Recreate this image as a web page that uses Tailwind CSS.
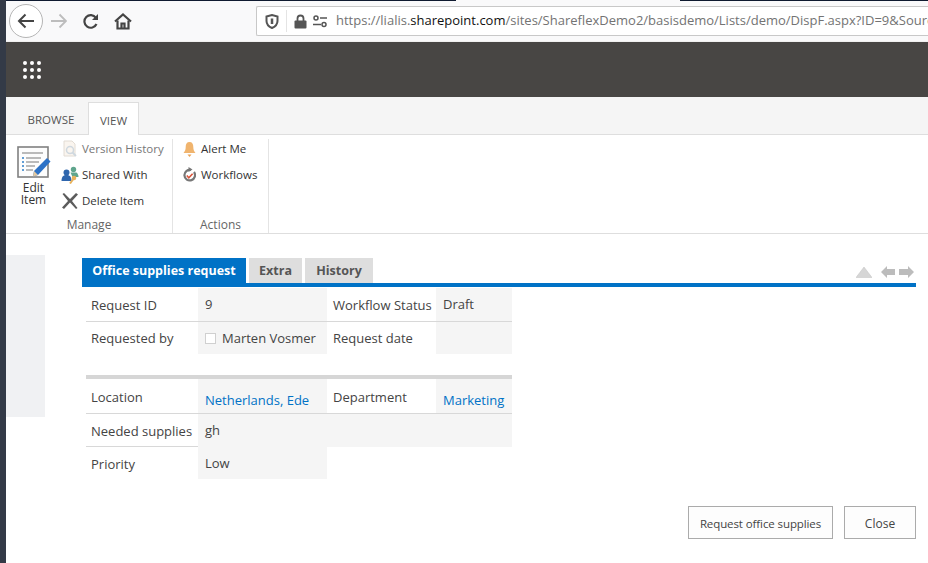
<!DOCTYPE html>
<html lang="en">
<head>
  <meta charset="UTF-8">
  <title>Office supplies request</title>
  <script src="https://cdn.jsdelivr.net/npm/@tailwindcss/browser@4"></script>
</head>
<body class="h-[563px] w-[928px] overflow-hidden bg-white flex font-['Open_Sans',sans-serif] text-[13px] text-[#444]">

  <!-- desktop edge -->
  <div class="w-[6px] bg-[#333a47]"></div>

  <div class="w-[922px] flex flex-col">
    <!-- browser toolbar -->
    <div class="h-[1px] flex bg-[#f9f9fa]">
      <div class="w-[450px] bg-[#0f1a30]"></div>
      <div class="w-[224px]"></div>
      <div class="w-[248px] bg-[#0f1a30]"></div>
    </div>
    <div class="h-[41px] bg-[#f9f9fa] flex items-center border-b border-[#f0f0f0]">
      <div class="w-[34px] h-[34px] rounded-full border border-[#b5b5b5] bg-white flex items-center justify-center ml-[3px] shrink-0">
        <svg width="18" height="16" viewBox="0 0 18 16" fill="none" stroke="#444" stroke-width="2"><path d="M17 8H2M8.500 1.500 2 8l6.500 6.500"/></svg>
      </div>
      <svg class="ml-[7px] shrink-0" width="17" height="16" viewBox="0 0 17 16" fill="none" stroke="#bdbdbd" stroke-width="1.800"><path d="M1 8h15M9.500 1.500 16 8l-6.500 6.500"/></svg>
      <svg class="ml-[16px] shrink-0" width="16" height="16" viewBox="0 0 16 16" fill="none" stroke="#444" stroke-width="2.200"><path d="M13.500 11a6.300 6.300 0 1 1-.6-6.200"/><path d="M15 1v6H9z" fill="#444" stroke="none"/></svg>
      <svg class="ml-[15px] shrink-0" width="18" height="17" viewBox="0 0 18 17" fill="none" stroke="#444" stroke-width="2.200"><path d="M1 8.500 9 1.500l8 7"/><path d="M3.500 7.500V15.500H14.500V7.500"/><path d="M7.500 15.500V10.500H10.500V15.500"/></svg>
      <!-- url box -->
      <div class="ml-[124px] flex-1 h-[30px] bg-white border border-r-0 border-[#c8c8c8] rounded-l-[2px] flex items-center overflow-hidden whitespace-nowrap">
        <svg class="ml-[8px] shrink-0" width="14" height="15" viewBox="0 0 14 15" fill="none" stroke="#555" stroke-width="2"><path d="M1.500 2.500 7 1l5.500 1.500V7c0 3.500-2.500 5.700-5.500 7C4 12.700 1.500 10.500 1.500 7z"/><path d="M7 4.500V10" stroke-width="2.500"/></svg>
        <div class="w-px h-[22px] bg-[#e4e4e4] ml-[7px] shrink-0"></div>
        <svg class="ml-[7px] shrink-0" width="13" height="15" viewBox="0 0 13 15"><path d="M3.500 7V4.500a3 3 0 0 1 6 0V7" fill="none" stroke="#555" stroke-width="1.800"/><rect x="0.500" y="6.500" width="12" height="8" rx="1" fill="#555"/></svg>
        <svg class="ml-[5px] shrink-0" width="16" height="13" viewBox="0 0 16 13" fill="none" stroke="#555" stroke-width="1.500"><circle cx="4" cy="3" r="2"/><path d="M8 3h7M1 9.500h8"/><circle cx="12" cy="9.500" r="2"/></svg>
        <div class="ml-[8px] text-[13px] text-[#737373]">https://lialis.<span class="text-[#111]">sharepoint.com</span>/sites/ShareflexDemo2/basisdemo/Lists/demo/DispF.aspx?ID=9&amp;Source=</div>
      </div>
    </div>

    <!-- suite bar -->
    <div class="h-[55px] bg-[#484644] flex items-center pl-[17px] shrink-0">
      <div class="grid grid-cols-3 gap-x-[3px] gap-y-[3px]">
        <i class="block w-[4px] h-[4px] rounded-full bg-white"></i><i class="block w-[4px] h-[4px] rounded-full bg-white"></i><i class="block w-[4px] h-[4px] rounded-full bg-white"></i>
        <i class="block w-[4px] h-[4px] rounded-full bg-white"></i><i class="block w-[4px] h-[4px] rounded-full bg-white"></i><i class="block w-[4px] h-[4px] rounded-full bg-white"></i>
        <i class="block w-[4px] h-[4px] rounded-full bg-white"></i><i class="block w-[4px] h-[4px] rounded-full bg-white"></i><i class="block w-[4px] h-[4px] rounded-full bg-white"></i>
      </div>
    </div>

    <!-- ribbon tabs -->
    <div class="h-[38px] bg-[#f5f5f5] border-b border-[#dedede] flex items-end pl-[8px] shrink-0">
      <div class="h-[32px] w-[74px] pt-[4px] flex items-center justify-center text-[11.5px] text-[#555]">BROWSE</div>
      <div class="h-[33px] w-[51px] pt-[3px] -mb-px bg-white border border-b-0 border-[#dedede] flex items-center justify-center text-[11.5px] text-[#555]">VIEW</div>
    </div>

    <!-- ribbon -->
    <div class="h-[99px] border-b border-[#dedede] flex pt-[4px] shrink-0 text-[11.500px] text-[#333]">
      <div class="w-[167px] border-r border-[#e4e4e4] h-[94px] flex flex-col">
        <div class="flex flex-1">
          <div class="w-[55px] flex flex-col items-center pt-[7px] text-[12px]">
            <svg width="34" height="32" viewBox="0 0 34 32">
              <rect x="1" y="1" width="30" height="30" fill="#fdfdfd" stroke="#808080" stroke-width="1.600"/>
              <path d="M5 7h21M9 12h15M9 16h13M9 20h9M9 24h7" stroke="#a5a5a5" stroke-width="1.500"/>
              <path d="M5 12h2M5 16h2M5 20h2M5 24h2" stroke="#2f7fc8" stroke-width="1.500"/>
              <path d="M30 12 33.500 15.500 21 29l-5 1.500L17 25z" fill="#2c72c7"/>
              <path d="M17 25l4 4-5 1.500z" fill="#e3c8a0"/>
            </svg>
            <span class="mt-[4px] text-center leading-[12px] text-[#333]">Edit<br>Item</span>
          </div>
          <div class="flex flex-col gap-[8px] pt-[1px]">
            <div class="h-[18px] flex items-center gap-[3px] text-[#777]">
              <svg class="shrink-0" width="18" height="18" viewBox="0 0 18 18"><path d="M3 1h8l3 3v12H3z" fill="#faf5ef" stroke="#e2dcd4"/><circle cx="9" cy="10" r="3.500" fill="none" stroke="#cfd8df" stroke-width="1.500"/><path d="M11.500 12.500 15 16" stroke="#cfd8df" stroke-width="1.800"/></svg>
              <span>Version History</span>
            </div>
            <div class="h-[18px] flex items-center gap-[3px]">
              <svg class="shrink-0" width="18" height="18" viewBox="0 0 18 18"><circle cx="5.500" cy="6.500" r="3" fill="#2f66ad"/><path d="M0.500 15c0-4.500 2-6 5-6s5 1.500 5 6z" fill="#2f66ad"/><circle cx="12.500" cy="3.500" r="2.700" fill="#5fa58d"/><path d="M9.500 6.500h6c1.200 1 2 2.500 2 4.500h-6z" fill="#5fa58d"/><circle cx="13" cy="12" r="2.300" fill="#e8b25c"/><path d="M12 13.500 9 17.500" stroke="#e8b25c" stroke-width="2"/></svg>
              <span>Shared With</span>
            </div>
            <div class="h-[18px] flex items-center gap-[3px]">
              <svg class="shrink-0" width="18" height="18" viewBox="0 0 18 18"><path d="M1.500 2 3 1l6 6 6-6 2 1.500-6 6.500 5.500 7-1.500 1-6-6.500L3 17l-2-1.500 6-6.500z" fill="#5c5c5c"/></svg>
              <span>Delete Item</span>
            </div>
          </div>
        </div>
        <div class="h-[16px] leading-[16px] text-center text-[#666] text-[12px]">Manage</div>
      </div>
      <div class="w-[96px] border-r border-[#e4e4e4] h-[94px] flex flex-col">
        <div class="flex-1 flex flex-col gap-[8px] pt-[1px] pl-[10px]">
          <div class="h-[18px] flex items-center gap-[5px]">
            <svg class="shrink-0" width="13" height="17" viewBox="0 0 13 17"><path d="M6.500 1C3.700 1 2.700 3 2.700 6c0 3-.9 4.500-2.200 6h12c-1.300-1.500-2.200-3-2.200-6 0-3-1-5-3.800-5z" fill="#f0b46e"/><path d="M4.500 13.500h4l-2 2.500z" fill="#e9a355"/></svg>
            <span>Alert Me</span>
          </div>
          <div class="h-[18px] flex items-center gap-[5px]">
            <svg class="shrink-0" width="13" height="16" viewBox="0 0 13 16" fill="none"><path d="M11 5a5.300 5.300 0 1 1-3-2" stroke="#777" stroke-width="2.200"/><path d="M5.500 0 9.500 2.500 5.500 5z" fill="#777"/><path d="M3.800 8.500l2 2.200 3.800-4" stroke="#d9543a" stroke-width="1.600"/></svg>
            <span>Workflows</span>
          </div>
        </div>
        <div class="h-[16px] leading-[16px] text-center text-[#666] text-[12px]">Actions</div>
      </div>
    </div>

    <!-- page content -->
    <div class="flex-1 flex">
      <div class="w-[39px] h-[162px] mt-[21px] bg-[#f0f1f3] shrink-0"></div>
      <div class="ml-[37px] w-[834px] pt-[24px]">
        <!-- form tabs -->
        <div class="flex h-[25px] items-end">
          <div class="h-[25px] w-[164px] pt-[1px] bg-[#0072c6] text-white font-bold flex items-center justify-center text-[12.500px]">Office supplies request</div>
          <div class="h-[25px] w-[53px] pt-[1px] ml-[3px] bg-[#dedede] text-[#555] font-bold flex items-center justify-center text-[12.500px]">Extra</div>
          <div class="h-[25px] w-[68px] pt-[1px] ml-[3px] bg-[#dedede] text-[#555] font-bold flex items-center justify-center text-[12.500px]">History</div>
          <div class="ml-auto flex items-end mb-[5px] mr-[2px]">
            <svg width="16" height="11" viewBox="0 0 16 11"><path d="M8 0 16 10.500H0z" fill="#d6d6d6" stroke="#c2c2c2" stroke-width="0.500"/></svg>
            <svg class="ml-[9px]" width="14" height="12" viewBox="0 0 14 12"><path d="M0 6 6 0v3h8v6H6v3z" fill="#bcbcbc"/></svg>
            <svg class="ml-[4px]" width="15" height="12" viewBox="0 0 15 12"><path d="M15 6 9 0v3H0v6h9v3z" fill="#bcbcbc"/></svg>
          </div>
        </div>
        <div class="h-[4px] bg-[#0072c6]"></div>

        <div class="ml-[4px] w-[426px] mt-[1px]">
          <div class="grid grid-cols-[112px_129px_109px_76px] grid-rows-[34px_32px]">
            <div class="px-[5px] pt-[8px] border-b border-[#d8d8d8] text-[#444]">Request ID</div>
            <div class="pl-[7px] pt-[7px] bg-[#f5f5f5] border-b border-[#d8d8d8]">9</div>
            <div class="pl-[6px] pt-[8px] border-b border-[#d8d8d8] text-[#444]">Workflow Status</div>
            <div class="pl-[7px] pt-[7px] bg-[#f5f5f5] border-b border-[#d8d8d8]">Draft</div>
            <div class="px-[5px] pt-[7px] text-[#444]">Requested by</div>
            <div class="pl-[7px] pt-[7px] bg-[#f5f5f5] flex items-start gap-[6px]"><span class="mt-[4px] w-[11px] h-[11px] border border-[#d0d0d0] bg-white shrink-0"></span><span>Marten Vosmer</span></div>
            <div class="pl-[6px] pt-[7px] text-[#444]">Request date</div>
            <div class="bg-[#f5f5f5]"></div>
          </div>

          <div class="h-[4px] bg-[#d6d6d6] mt-[21px]"></div>

          <div class="grid grid-cols-[112px_129px_109px_76px] grid-rows-[35px_33px_32px]">
            <div class="px-[5px] pt-[9px] border-b border-[#d8d8d8] text-[#444]">Location</div>
            <div class="pl-[7px] pt-[12px] bg-[#f5f5f5] border-b border-[#d8d8d8] text-[#0072c6]">Netherlands, Ede</div>
            <div class="pl-[6px] pt-[9px] border-b border-[#d8d8d8] text-[#444]">Department</div>
            <div class="pl-[7px] pt-[12px] bg-[#f5f5f5] border-b border-[#d8d8d8] text-[#0072c6]">Marketing</div>
            <div class="px-[5px] pt-[8px] border-b border-[#d8d8d8] text-[#444]">Needed supplies</div>
            <div class="col-span-3 pl-[7px] pt-[7px] bg-[#f5f5f5]">gh</div>
            <div class="px-[5px] pt-[8px] text-[#444]">Priority</div>
            <div class="pl-[7px] pt-[7px] bg-[#f5f5f5]">Low</div>
          </div>
        </div>

        <!-- buttons -->
        <div class="flex justify-end gap-[11px] mt-[27px] text-[12px] text-[#444]">
          <button class="h-[33px] w-[145px] pt-[2px] border border-[#ababab] bg-[#fdfdfd] text-[11.500px] tracking-[-0.1px]">Request office supplies</button>
          <button class="h-[33px] w-[72px] pt-[2px] border border-[#ababab] bg-[#fdfdfd]">Close</button>
        </div>
      </div>
    </div>
  </div>
</body>
</html>
